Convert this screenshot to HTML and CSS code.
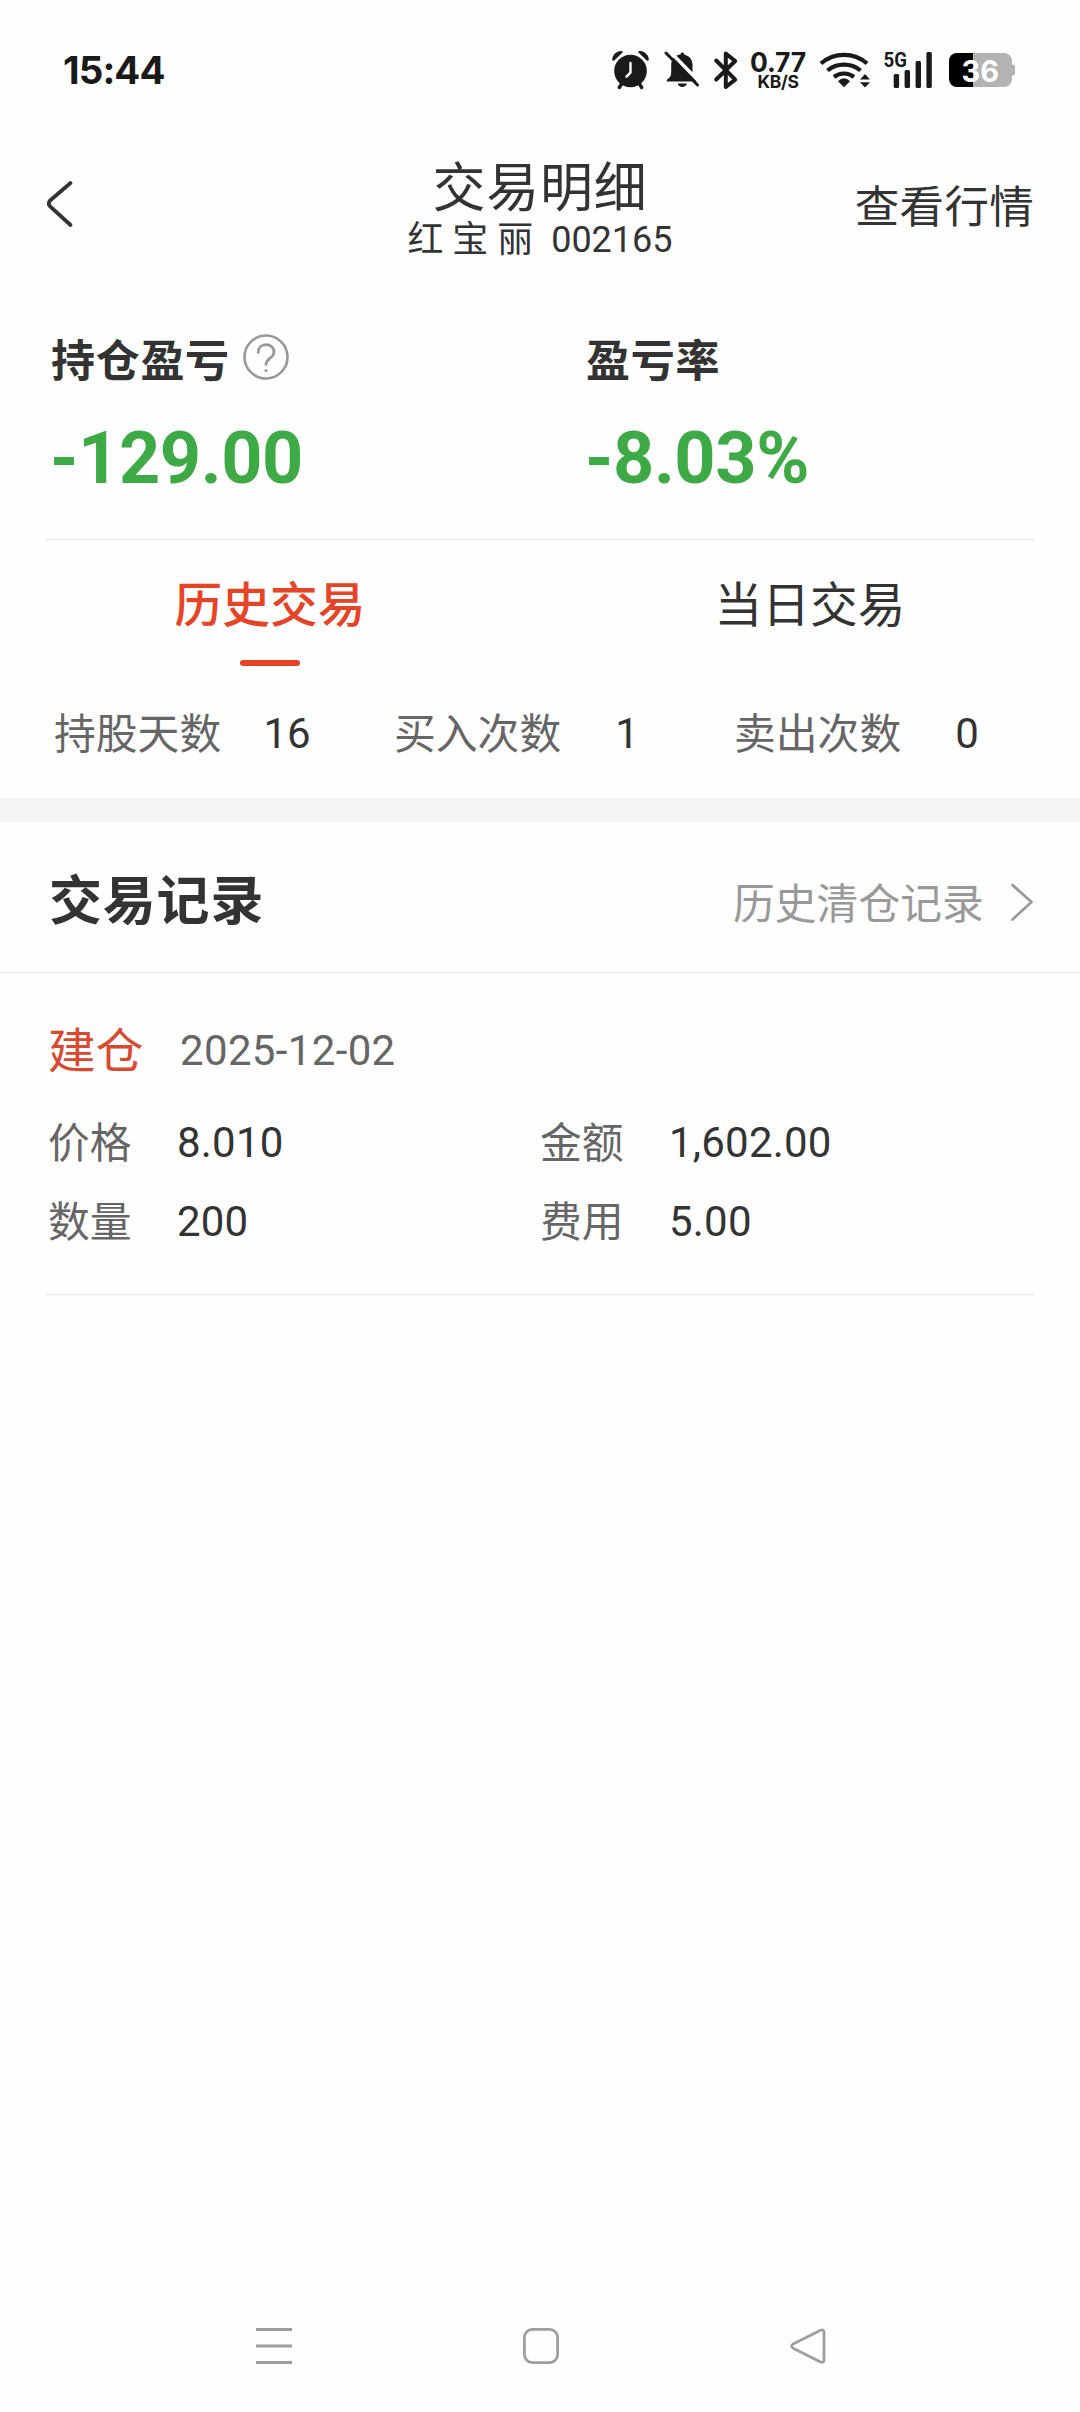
FILE: index.html
```html
<!DOCTYPE html>
<html lang="zh-CN">
<head>
<meta charset="utf-8">
<title>交易明细</title>
<link rel="stylesheet" href="styles.css">
</head>
<body>
<div class="screen">
  <div class="status-bar">
    <span class="clock">15:44</span>
    <div class="status-icons">
      <svg class="ic-alarm" width="38" height="40" viewBox="612 50 38 40">
        <g fill="#1a1a1a"><circle cx="630.5" cy="71" r="16.3"/>
        <path d="M612.3 60.2c-.6-4.500 4-9.200 8.700-9.200 1 0 1.800.6 1.800 1.200l-8.500 8.200c-.7.6-1.800.6-2-.2z"/>
        <path d="M648.700 60.2c.6-4.500-4-9.200-8.700-9.200-1 0-1.800.6-1.800 1.200l8.500 8.200c.7.6 1.800.6 2-.2z"/></g>
        <path d="M621.500 84l-2.200 3.500M639.500 84l2.200 3.500" stroke="#1a1a1a" stroke-width="3.400" stroke-linecap="round"/>
        <path d="M630.500 63v9.500l-4 4.200" fill="none" stroke="#fefefe" stroke-width="2.400" stroke-linecap="round"/>
      </svg>
      <svg class="ic-bell" width="38" height="40" viewBox="664 50 38 40">
        <path d="M666.800 81.500v-1.700c3-1.800 4.400-4 4.400-7V65c0-6 4-10 9.300-10.400v-.2a1.900 1.900 0 0 1 3.800 0v.3c4.800.7 8.200 4.800 8.200 10.300v8c0 3 1.300 5 4.200 6.800v1.700z" fill="#1a1a1a"/>
        <path d="M677.500 83.500h9.500c-.8 2.200-2.500 3.400-4.700 3.400s-4-1.200-4.800-3.400z" fill="#1a1a1a"/>
        <path d="M668.500 50l34 35" stroke="#fefefe" stroke-width="3.500"/>
        <path d="M666 53l31.500 32" stroke="#1a1a1a" stroke-width="3" stroke-linecap="round"/>
      </svg>
      <svg class="ic-bt" width="26" height="40" viewBox="713 50 26 40">
        <path d="M716.200 60.500l19 19.200-9.400 7.300v-33.500l9.400 7.500-19 18.500" fill="none" stroke="#1a1a1a" stroke-width="4" stroke-linejoin="round" stroke-linecap="round"/>
      </svg>
      <div class="net-speed"><span class="rate">0.77</span><span class="unit">KB/S</span></div>
      <svg class="ic-wifi" width="54" height="40" viewBox="818 50 54 40">
        <path d="M821 63.500a35 35 0 0 1 46 0M827.500 70.500a26 26 0 0 1 33 0M834 77a16 16 0 0 1 20 0" fill="none" stroke="#1a1a1a" stroke-width="4.200"/>
        <path d="M838 81.300q6-6 12 0l-6 6z" fill="#1a1a1a"/>
        <path d="M860 79.500l5-5.500 5 5.500zM860 82.300h10l-5 5.200z" fill="#1a1a1a"/>
      </svg>
      <svg class="ic-signal" width="52" height="46" viewBox="882 47 52 46">
        <text x="883.500" y="66.500" textLength="23.500" lengthAdjust="spacingAndGlyphs" class="signal-type">5G</text>
        <g fill="#1a1a1a"><rect x="893.700" y="74" width="5.400" height="14" rx="1.500"/><rect x="904.600" y="70" width="5.400" height="18" rx="1.500"/><rect x="915.600" y="61" width="5.400" height="27" rx="1.500"/><rect x="926.400" y="52" width="5.400" height="36" rx="1.500"/></g>
      </svg>
      <svg class="ic-battery" width="67" height="36" viewBox="949 53 67 36">
        <clipPath id="cell"><rect x="949" y="54" width="63" height="34" rx="8"/></clipPath>
        <path d="M1011 65.500h2a2 2 0 0 1 2 2v7a2 2 0 0 1-2 2h-2z" fill="#b3b3b3"/>
        <g clip-path="url(#cell)"><rect x="949" y="54" width="63" height="34" fill="#b3b3b3"/><rect x="949" y="54" width="24" height="34" fill="#000"/></g>
        <text x="961.500" y="82.800" textLength="37.500" lengthAdjust="spacingAndGlyphs" class="battery-level">36</text>
      </svg>
    </div>
  </div>

  <header class="header">
    <svg class="back" width="30" height="50" viewBox="45 179 30 50">
      <path d="M70.500 183L49.800 200.800q-2 2.700 0 5.400L70.500 225" fill="none" stroke="#333" stroke-width="3.800" stroke-linecap="round" stroke-linejoin="round"/>
    </svg>
    <div class="title-block">
      <h1 class="title">交易明细</h1>
      <p class="stock">红 宝 丽&nbsp; 002165</p>
    </div>
    <a class="quote-link">查看行情</a>
  </header>

  <section class="summary">
    <div class="metric">
      <div class="metric-label"><span>持仓盈亏</span>
        <svg class="help" width="46" height="46" viewBox="0 0 46 46" fill="none" stroke="#999">
          <circle cx="23" cy="23" r="21.500" stroke-width="2.600"/>
          <path d="M15.300 18.500c0-4.700 3.200-7.800 7.800-7.800s7.900 3.100 7.900 7.200c0 6.300-8 6.200-8 12.600" stroke-width="2.800" stroke-linecap="round"/>
          <circle cx="23" cy="36.500" r="1.600" fill="#999" stroke="none"/>
        </svg>
      </div>
      <div class="metric-value">-129.00</div>
    </div>
    <div class="metric">
      <div class="metric-label"><span>盈亏率</span></div>
      <div class="metric-value">-8.03%</div>
    </div>
  </section>

  <nav class="tabs">
    <a class="tab active">历史交易</a>
    <a class="tab">当日交易</a>
  </nav>

  <div class="stats">
    <div class="stat"><span class="stat-name">持股天数</span><span class="stat-value">16</span></div>
    <div class="stat"><span class="stat-name">买入次数</span><span class="stat-value">1</span></div>
    <div class="stat"><span class="stat-name">卖出次数</span><span class="stat-value">0</span></div>
  </div>

  <section class="records">
    <div class="records-head">
      <h2 class="records-title">交易记录</h2>
      <a class="history-link">历史清仓记录</a>
      <svg class="chevron" width="24" height="40" viewBox="0 0 24 40">
        <path d="M2.500 3L21.500 20 2.500 37.500" fill="none" stroke="#999" stroke-width="2.700" stroke-linecap="round" stroke-linejoin="round"/>
      </svg>
    </div>
    <article class="record">
      <div class="record-top"><span class="record-type">建仓</span><time class="record-date">2025-12-02</time></div>
      <dl class="fields">
        <div class="field"><dt>价格</dt><dd>8.010</dd></div>
        <div class="field"><dt>金额</dt><dd>1,602.00</dd></div>
        <div class="field"><dt>数量</dt><dd>200</dd></div>
        <div class="field"><dt>费用</dt><dd>5.00</dd></div>
      </dl>
    </article>
  </section>

  <footer class="system-nav">
    <svg width="36" height="38" viewBox="0 0 36 38" stroke="#9e9e9e" stroke-width="3"><path d="M0 2.500h36M0 19h36M0 35.500h36"/></svg>
    <svg width="36" height="38" viewBox="0 0 36 38" fill="none" stroke="#9e9e9e" stroke-width="2.800"><rect x="1.400" y="2.400" width="33.200" height="33.200" rx="8"/></svg>
    <svg width="36" height="38" viewBox="0 0 36 38" fill="none" stroke="#9e9e9e" stroke-width="2.800" stroke-linejoin="round"><path d="M30.500 3.200L3.200 17q-3.200 2 0 4.200L30.500 35q3.500 1.300 3.500-2.200V5.500q0-3.600-3.500-2.300z"/></svg>
  </footer>
</div>
</body>
</html>
```
FILE: styles.css
```css
* { box-sizing: border-box; }

body {
  margin: 0;
  background: #fefefe;
  color: #333;
  font-family: Roboto, "Noto Sans CJK SC", sans-serif;
}

h1, h2, p, dl, dd { margin: 0; }
svg { display: block; flex: none; }

.screen {
  display: flex;
  flex-direction: column;
  width: 1080px;
  height: 2412px;
}

/* System status bar */
.status-bar {
  display: flex;
  align-items: center;
  justify-content: space-between;
  height: 140px;
  padding: 0 64px 0 63px;
  color: #1a1a1a;
  font-family: Inter, sans-serif;
}
.clock { font-size: 38.5px; font-weight: 700; line-height: 50px; letter-spacing: -0.9px; }
.status-icons { display: flex; align-items: center; }
.ic-bell { margin-left: 14px; }
.ic-bt { margin-left: 11px; }
.net-speed {
  display: flex;
  flex-direction: column;
  align-items: center;
  width: 60px;
  margin-left: 9px;
  font-weight: 700;
}
.rate { font-size: 26.5px; line-height: 22px; letter-spacing: -0.2px; }
.unit { font-size: 17.5px; line-height: 17px; letter-spacing: -0.3px; }
.ic-wifi { margin-left: 10px; }
.ic-signal { margin-left: 10px; }
.ic-battery { margin-left: 15px; }
.signal-type { font: 700 21px Roboto, sans-serif; fill: #1a1a1a; }
.battery-level { font: 700 30px Inter, sans-serif; fill: #fff; }

/* Page header */
.header {
  display: grid;
  grid-template-columns: 1fr auto 1fr;
  align-items: center;
  height: 128px;
  padding: 0 45px;
}
.title-block { padding-top: 11px; text-align: center; }
.title { font-size: 53px; line-height: 61px; letter-spacing: 0.8px; }
.stock { font-size: 36px; line-height: 40px; white-space: nowrap; }
.quote-link { justify-self: end; padding: 7px 1px 0 0; font-size: 44.5px; line-height: 54px; letter-spacing: 0.3px; }
.title, .stock { font-weight: 400; }

/* Profit summary */
.summary {
  display: grid;
  grid-template-columns: 535px 1fr;
  margin: 0 45px;
  padding: 65px 0 38px 6px;
  border-bottom: 1px solid #e9e9e9;
}
.metric-label { display: flex; align-items: center; height: 56px; font-size: 44px; font-weight: 700; letter-spacing: 0.7px; }
.metric-label span { padding-top: 1px; line-height: 54px; }
.help { margin: 0 0 8px 13px; }
.metric-value { margin: 28px 0 0 -1px; color: #3daa46; font-size: 72px; font-weight: 700; line-height: 84px; letter-spacing: -0.4px; }

/* Tabs */
.tabs { display: grid; grid-template-columns: 1fr 1fr; padding-top: 36px; }
.tab {
  display: flex;
  flex-direction: column;
  align-items: center;
  font-size: 47.7px;
  line-height: 60px;
}
.tab::after { content: ""; width: 60px; height: 6px; margin-top: 24px; border-radius: 3px; }
.tab.active { color: #e64426; font-weight: 500; }
.tab.active::after { background: #e84125; }

/* Counters */
.stats {
  display: grid;
  grid-template-columns: repeat(3, 340px);
  padding: 43px 0 38px 54px;
  font-size: 42px;
  line-height: 50px;
}
.stat { display: flex; }
.stat-name { width: 168px; padding-top: 1px; color: #666; font-size: 41.8px; }
.stat-value { width: 130px; text-align: center; }

/* Trade records */
.records { border-top: 24px solid #f4f4f4; }
.records-head {
  display: flex;
  align-items: center;
  height: 151px;
  padding: 10px 46px 0 49px;
  border-bottom: 1px solid #e9e9e9;
}
.records-title { flex: 1; font-size: 53px; font-weight: 700; line-height: 60px; letter-spacing: 0.8px; }
.history-link { width: 252px; padding-top: 5px; color: #999; font-size: 41.8px; line-height: 50px; white-space: nowrap; }
.chevron { margin-left: 25px; }
.record { margin: 0 45px; padding: 48px 0 46px 3px; border-bottom: 1px solid #e9e9e9; }
.record-top { display: flex; align-items: center; height: 60px; }
.record-type { width: 132px; padding-top: 1px; color: #d84a2f; font-size: 47.7px; line-height: 58px; }
.record-date { color: #666; font-size: 42px; line-height: 50px; letter-spacing: 0.35px; }
.fields {
  display: grid;
  grid-template-columns: 492px 1fr;
  row-gap: 28px;
  margin-top: 37px;
  font-size: 42px;
  line-height: 50px;
}
.field { display: flex; height: 51px; }
.field dt { width: 129px; padding-top: 1px; color: #666; font-size: 41.8px; }
.field dd { letter-spacing: 0.2px; }

/* System navigation */
.system-nav {
  display: flex;
  align-items: center;
  gap: 231px;
  height: 132px;
  margin-top: auto;
  padding-left: 256px;
}
```
